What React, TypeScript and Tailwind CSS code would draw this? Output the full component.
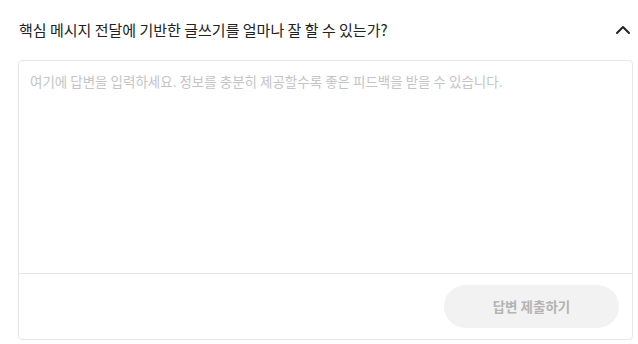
import { ChevronUp } from "lucide-react";

export default function App() {
  return (
    <div className="w-[638px] h-[344px] bg-white pl-[18px] pr-[5px] font-['Noto_Sans_CJK_KR','Noto_Sans',sans-serif]">
      <div className="flex h-[60px] items-center justify-between">
        <h2 className="pl-[1px] text-[15px] text-[#222]">
          핵심 메시지 전달에 기반한 글쓰기를 얼마나 잘 할 수 있는가?
        </h2>
        <ChevronUp className="mr-[-2px] h-[24px] w-[24px] text-[#222]" strokeWidth={2} />
      </div>
      <div className="flex flex-col rounded-[4px] border border-[#e6e6e6]">
        <textarea
          className="h-[212px] resize-none px-[11px] py-[10px] text-[13.5px] text-[#333] placeholder:text-[#c4c4c4] outline-none"
          placeholder="여기에 답변을 입력하세요. 정보를 충분히 제공할수록 좋은 피드백을 받을 수 있습니다."
        />
        <div className="flex justify-end border-t border-[#e6e6e6] px-[13px] py-[11px]">
          <button
            disabled
            className="h-[43px] w-[175px] rounded-full bg-[#f2f2f2] text-[13.5px] font-semibold text-[#b4b4b4]"
          >
            답변 제출하기
          </button>
        </div>
      </div>
    </div>
  );
}
